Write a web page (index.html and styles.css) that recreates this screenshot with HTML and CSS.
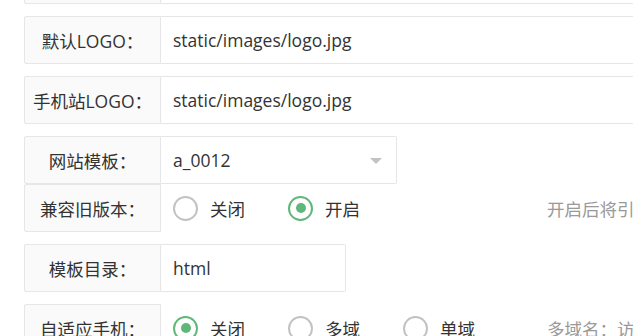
FILE: index.html
```html
<!DOCTYPE html>
<html lang="zh-CN">
<head>
<meta charset="utf-8">
<title>设置</title>
<link rel="stylesheet" href="styles.css">
</head>
<body>
<div class="form">
  <div class="item">
    <label class="label">网站名称：</label>
    <div class="input wide">网站</div>
  </div>
  <div class="item">
    <label class="label">默认LOGO：</label>
    <div class="input wide">static/images/logo.jpg</div>
  </div>
  <div class="item">
    <label class="label">手机站LOGO：</label>
    <div class="input wide">static/images/logo.jpg</div>
  </div>
  <div class="item tight">
    <label class="label">网站模板：</label>
    <div class="input select">a_0012<span class="edge"></span></div>
  </div>
  <div class="item">
    <label class="label">兼容旧版本：</label>
    <div class="radios">
      <span class="radio"><i class="circle"></i>关闭</span>
      <span class="radio"><i class="circle on"></i>开启</span>
    </div>
    <div class="aux">开启后将引用旧版本模板文件</div>
  </div>
  <div class="item">
    <label class="label">模板目录：</label>
    <div class="input dir">html</div>
  </div>
  <div class="item">
    <label class="label">自适应手机：</label>
    <div class="radios">
      <span class="radio"><i class="circle on"></i>关闭</span>
      <span class="radio"><i class="circle"></i>多域</span>
      <span class="radio"><i class="circle"></i>单域</span>
    </div>
    <div class="aux">多域名：访问手机域名</div>
  </div>
</div>
</body>
</html>
```

FILE: styles.css
```css
html, body {
  margin: 0;
  padding: 0;
  background: #fff;
  overflow: hidden;
}
body {
  width: 633px;
  height: 336px;
  font-family: "Open Sans", "Noto Sans CJK SC", "Microsoft YaHei", sans-serif;
  font-size: 17.5px;
  color: #333;
}
.form {
  width: 1000px;
  margin-top: -44px;
  padding-left: 24px;
}
.item {
  display: flex;
  align-items: stretch;
  height: 48px;
  margin-bottom: 12px;
}
.item.tight {
  margin-bottom: 0;
}
.label {
  box-sizing: border-box;
  width: 137px;
  flex: none;
  display: flex;
  align-items: center;
  justify-content: center;
  background: #fafafa;
  border: 1px solid #e6e6e6;
  border-radius: 2px 0 0 2px;
  color: #333;
  white-space: nowrap;
}
.input {
  box-sizing: border-box;
  display: flex;
  align-items: center;
  padding-left: 12px;
  border: 1px solid #e6e6e6;
  border-left: none;
  border-radius: 0 2px 2px 0;
  background: #fff;
  color: #333;
  position: relative;
}
.wide {
  width: 800px;
}
.select {
  width: 236px;
}
.dir {
  width: 185px;
}
.edge {
  position: absolute;
  right: 14px;
  top: 21px;
  width: 0;
  height: 0;
  border-style: solid;
  border-width: 6px 6px 0 6px;
  border-color: #c2c2c2 transparent transparent transparent;
}
.radios {
  display: flex;
  align-items: center;
  width: 386px;
  box-sizing: border-box;
  padding-left: 12px;
}
.radio {
  display: inline-flex;
  align-items: center;
  width: 115px;
  flex: none;
  color: #333;
}
.circle {
  box-sizing: border-box;
  width: 25px;
  height: 25px;
  border: 2px solid #c2c2c2;
  border-radius: 50%;
  margin-right: 12px;
  display: inline-flex;
  align-items: center;
  justify-content: center;
}
.circle.on {
  border-color: #5fb878;
}
.circle.on::after {
  content: "";
  width: 10px;
  height: 10px;
  border-radius: 50%;
  background: #5fb878;
}
.aux {
  display: flex;
  align-items: center;
  color: #999;
  white-space: nowrap;
}
```
